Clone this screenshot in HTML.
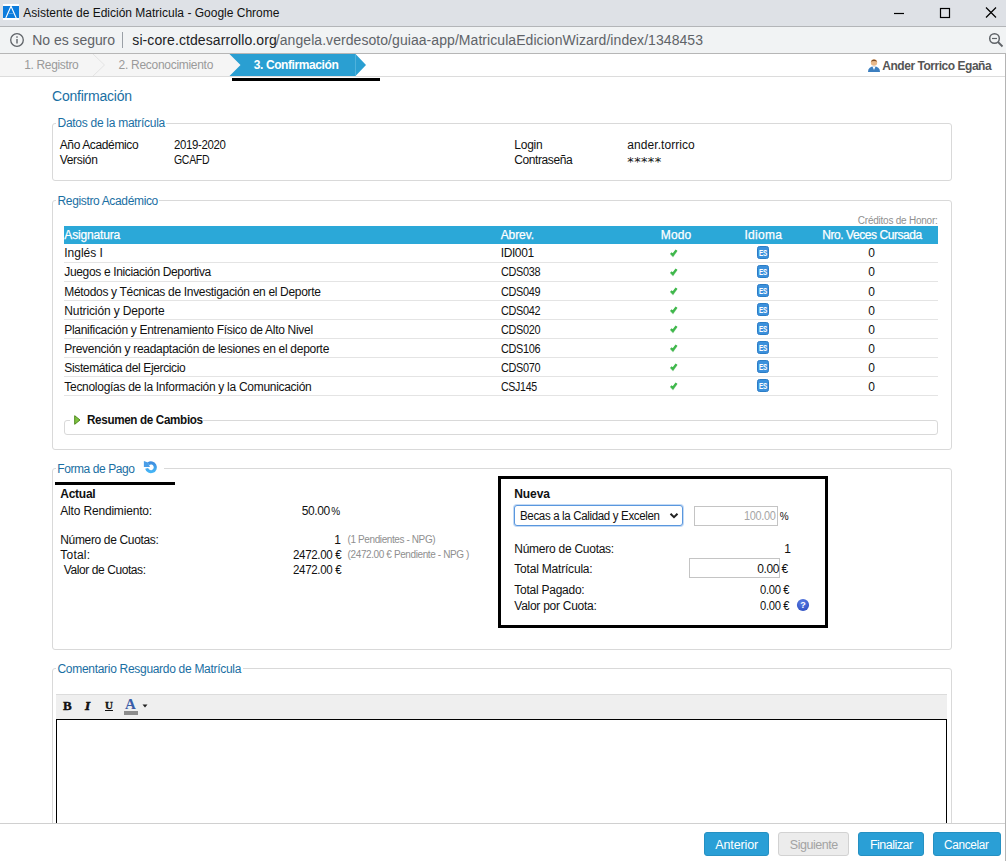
<!DOCTYPE html>
<html lang="es">
<head>
<meta charset="utf-8">
<title>Asistente de Edición Matricula</title>
<style>
*{box-sizing:border-box;margin:0;padding:0}
html,body{width:1006px;height:861px;overflow:hidden;background:#fff}
body{font-family:"Liberation Sans","DejaVu Sans",sans-serif;font-size:12px;color:#111;position:relative}
.abs{position:absolute;white-space:nowrap}
#titlebar{left:0;top:0;width:1006px;height:26px;background:#dee1e6}
#titleline{left:0;top:26px;width:1006px;height:1px;background:#b3b5b8}
#urlbar{left:0;top:27px;width:1006px;height:26px;background:#f1f3f4}
#urlline{left:0;top:53px;width:1006px;height:1px;background:#b6b6b6}
.tt{font-size:12px;color:#111;line-height:14px}
.ub{font-size:14px;color:#5f6368;line-height:16px}
#urlsep{left:122px;top:32px;width:1px;height:16px;background:#9aa0a6}
#wizbar{left:0;top:54px;width:1005px;height:23px;background:#fff;border-bottom:1px solid #dcdcdc}
#wizgray{left:0;top:54px;width:245px;height:22px;background:#f5f5f5}
.step{font-size:12px;color:#9a9a9a;line-height:14px}
#rightedge{left:1005px;top:54px;width:1px;height:807px;background:#b4b4b4}
.h1{font-size:14px;color:#1a6fa3;line-height:16px}
.fs{border:1px solid #d9d9d9;border-radius:3px}
.lgbg{background:#fff;height:14px}
.lg{color:#1a6fa3;font-size:12px;line-height:14px}
.t{font-size:12px;color:#111;line-height:14px}
.g{color:#8f8f8f;font-size:10px;line-height:12px}
#thead{left:64px;top:226px;width:874px;height:18px;background:#2ba8d8}
.th{color:#fff;line-height:14px;font-size:12px;-webkit-text-stroke:0.25px #fff}
.rowline{left:64px;width:874px;height:1px;background:#e4e4e4}
.es{left:757px;width:12px;height:13px;background:#3b92dc;border:1px solid #2a7cc6;border-radius:2.5px;color:#fff;font-size:8px;font-weight:bold;line-height:11px;text-align:center;letter-spacing:-0.5px}
.btn{top:832px;height:24px;border-radius:3px;background:#2a9fd6;border:1px solid #2590c2}
.bt{color:#fff;font-size:12.5px;line-height:14px}
</style>
</head>
<body>
<div class="abs" id="titlebar"></div>
<div class="abs" id="titleline"></div>
<div class="abs" id="urlbar"></div>
<div class="abs" id="urlline"></div>
<svg class="abs" style="left:3px;top:4px" width="16" height="16" viewBox="0 0 16 16"><rect width="16" height="16" fill="#fff"/><rect y="2" width="16" height="12" fill="#0c7cdd"/><path d="M2.800 14L8 2.200L13.200 14" fill="none" stroke="#fff" stroke-width="1.100"/><path d="M6 9.300H10" stroke="#fff" stroke-width="0.600" opacity="0.600"/></svg>
<svg class="abs" style="left:890px;top:6px" width="110" height="14" viewBox="0 0 110 14"><path d="M4 7.500H14" stroke="#000" stroke-width="1.2"/><rect x="50.500" y="2.500" width="9" height="9" fill="none" stroke="#000" stroke-width="1.2"/><path d="M96 1.500L106 11.500M106 1.500L96 11.500" stroke="#000" stroke-width="1.2"/></svg>
<svg class="abs" style="left:9px;top:32px" width="16" height="16" viewBox="0 0 16 16"><circle cx="8" cy="8" r="6.300" fill="none" stroke="#5f6368" stroke-width="1.300"/><rect x="7.300" y="7" width="1.400" height="4.500" fill="#5f6368"/><rect x="7.300" y="4.300" width="1.400" height="1.500" fill="#5f6368"/></svg>
<div class="abs" id="urlsep"></div>
<svg class="abs" style="left:987px;top:31px" width="18" height="18" viewBox="0 0 18 18"><circle cx="7.500" cy="7.500" r="4.800" fill="none" stroke="#5f6368" stroke-width="1.500"/><path d="M11 11L15.500 15.500" stroke="#5f6368" stroke-width="1.800"/><path d="M5 7.500H10" stroke="#5f6368" stroke-width="1.200"/></svg>

<div class="abs" id="wizbar"></div>
<div class="abs" id="wizgray"></div>
<svg class="abs" style="left:0;top:54px" width="400" height="28" viewBox="0 0 400 28">
<path d="M93 0L104.500 11L93 22" fill="none" stroke="#e4e4e4" stroke-width="1"/>
<path d="M229.500 0H355.500L366 11L355.500 22H229.500L240.500 11Z" fill="#2a9fd2"/>
<path d="M355.500 0V22" stroke="#4fb2dc" stroke-width="1" fill="none"/>
<rect x="232" y="24" width="148" height="3" fill="#000"/>
</svg>
<svg class="abs" style="left:867px;top:58px" width="14" height="15" viewBox="0 0 14 15"><circle cx="7" cy="4.500" r="3.200" fill="#e9b98a"/><path d="M3.800 3.500Q7 -0.500 10.200 3.500Q7 2.500 3.800 3.500Z" fill="#7a4a22"/><path d="M1 14Q1 8.500 7 8.500Q13 8.500 13 14Z" fill="#3c7fc0"/><path d="M5.500 8.600L7 12L8.500 8.600Z" fill="#fff"/></svg>
<div class="abs" id="rightedge"></div>

<!-- fieldsets -->
<div class="abs fs" style="left:52px;top:123px;width:900px;height:58px"></div>
<div class="abs lgbg" style="left:56px;top:116px;width:110px"></div>
<div class="abs fs" style="left:52px;top:200px;width:900px;height:250px"></div>
<div class="abs lgbg" style="left:56px;top:194px;width:103px"></div>
<div class="abs" id="thead"></div>
<div class="abs fs" style="left:64px;top:420px;width:874px;height:15px"></div>
<div class="abs lgbg" style="left:70px;top:413px;width:133px"></div>
<svg class="abs" style="left:74px;top:415px" width="7" height="10" viewBox="0 0 7 10"><path d="M0.700 0.700L6 5L0.700 9.300Z" fill="#7fc241" stroke="#4e8a1e" stroke-width="1"/></svg>
<div class="abs fs" style="left:52px;top:468px;width:900px;height:182px"></div>
<div class="abs lgbg" style="left:56px;top:461px;width:108px;height:15px"></div>
<svg class="abs" style="left:143px;top:460px" width="15" height="14" viewBox="0 0 15 14"><defs><linearGradient id="ug" x1="0" y1="0" x2="0" y2="1"><stop offset="0" stop-color="#3f8fe0"/><stop offset="1" stop-color="#45b4f5"/></linearGradient></defs><path d="M5.400 3.700A4.400 4.400 0 1 1 3.650 8.400" fill="none" stroke="url(#ug)" stroke-width="3.100"/><path d="M0.900 0.900L0.900 7L7 7L5 2.500Z" fill="#4a9ee8"/></svg>
<div class="abs" style="left:55px;top:482px;width:120px;height:3px;background:#000"></div>
<div class="abs" style="left:498px;top:476px;width:330px;height:152px;border:3px solid #000"></div>
<div class="abs" style="left:514px;top:505px;width:169px;height:21px;border:1px solid #5a97de;border-radius:3px;box-shadow:0 0 0 1px #c3daf5;background:#fff"></div>
<svg class="abs" style="left:669px;top:512px" width="10" height="8" viewBox="0 0 10 8"><path d="M1.500 1.800L5 5.200L8.500 1.800" fill="none" stroke="#222" stroke-width="2"/></svg>
<div class="abs" style="left:694px;top:506px;width:84px;height:20px;border:1px solid #c4c4c4;background:#fff"></div>
<div class="abs" style="left:689px;top:558px;width:91px;height:20px;border:1px solid #c4c4c4;background:#fff"></div>
<svg class="abs" style="left:796px;top:598px" width="14" height="14" viewBox="0 0 14 14"><defs><radialGradient id="hg" cx="0.45" cy="0.3" r="0.75"><stop offset="0" stop-color="#5b7fe6"/><stop offset="1" stop-color="#2f4fc0"/></radialGradient></defs><circle cx="7" cy="7" r="6.100" fill="url(#hg)"/><text x="7" y="10.200" text-anchor="middle" font-family="Liberation Sans, sans-serif" font-weight="bold" font-size="9" fill="#fff">?</text></svg>

<div class="abs fs" style="left:52px;top:668px;width:900px;height:200px"></div>
<div class="abs lgbg" style="left:56px;top:661px;width:187px"></div>
<div class="abs" style="left:56px;top:694px;width:891px;height:25px;background:#efefef;border-top:1px solid #dcdcdc"></div>
<div class="abs" style="left:56px;top:719px;width:891px;height:120px;border:1px solid #000;background:#fff"></div>
<div class="abs" style="left:63px;top:698px;font-family:'Liberation Serif',serif;font-weight:bold;font-size:13px;color:#111;-webkit-text-stroke:0.4px #111">B</div>
<div class="abs" style="left:85px;top:698px;font-family:'Liberation Serif',serif;font-weight:bold;font-style:italic;font-size:13px;color:#111;-webkit-text-stroke:0.6px #111">I</div>
<div class="abs" style="left:105px;top:699px;font-family:'Liberation Serif',serif;font-weight:bold;font-size:11px;text-decoration:underline;color:#111;-webkit-text-stroke:0.3px #111">U</div>
<div class="abs" style="left:125px;top:696px;font-family:'Liberation Serif',serif;font-weight:bold;font-size:15px;color:#3a5ea8">A</div>
<div class="abs" style="left:124px;top:711px;width:14px;height:4px;background:#8c8c8c"></div>
<svg class="abs" style="left:142px;top:704px" width="6" height="4" viewBox="0 0 6 4"><path d="M0.500 0.500H5.500L3 3.500Z" fill="#222"/></svg>

<div class="abs" style="left:0;top:823px;width:1005px;height:38px;background:#fff;border-top:1px solid #d0d0d0"></div>
<div class="abs btn" style="left:704px;width:65px"></div>
<div class="abs btn" style="left:778px;width:71px;background:#ececec;border-color:#d2d2d2"></div>
<div class="abs btn" style="left:858px;width:66px"></div>
<div class="abs btn" style="left:933px;width:68px"></div>

<div class="abs rowline" style="top:262px"></div>
<div class="abs rowline" style="top:281px"></div>
<div class="abs rowline" style="top:300px"></div>
<div class="abs rowline" style="top:319px"></div>
<div class="abs rowline" style="top:338px"></div>
<div class="abs rowline" style="top:357px"></div>
<div class="abs rowline" style="top:376px"></div>
<div class="abs rowline" style="top:395px"></div>
<svg class="abs" style="left:669px;top:248px" width="10" height="10" viewBox="0 0 10 10"><path d="M1.900 5.100L3.900 7.100L7.500 2.100" fill="none" stroke="#2f9e3c" stroke-width="2.400" transform="translate(0 0.500)" opacity="0.350"/><path d="M1.900 5L3.900 7L7.500 2.100" fill="none" stroke="#3fb84b" stroke-width="2.300"/></svg>
<svg class="abs" style="left:757px;top:246px" width="12" height="13" viewBox="0 0 12 13"><rect x="0.500" y="0.500" width="11" height="12" rx="2" fill="#3c90dc" stroke="#2b7dc6"/><text x="1.900" y="9.900" font-family="Liberation Sans, sans-serif" font-weight="bold" font-size="8.500" fill="#fff" textLength="8.400" lengthAdjust="spacingAndGlyphs">ES</text></svg>
<svg class="abs" style="left:669px;top:267px" width="10" height="10" viewBox="0 0 10 10"><path d="M1.900 5.100L3.900 7.100L7.500 2.100" fill="none" stroke="#2f9e3c" stroke-width="2.400" transform="translate(0 0.500)" opacity="0.350"/><path d="M1.900 5L3.900 7L7.500 2.100" fill="none" stroke="#3fb84b" stroke-width="2.300"/></svg>
<svg class="abs" style="left:757px;top:265px" width="12" height="13" viewBox="0 0 12 13"><rect x="0.500" y="0.500" width="11" height="12" rx="2" fill="#3c90dc" stroke="#2b7dc6"/><text x="1.900" y="9.900" font-family="Liberation Sans, sans-serif" font-weight="bold" font-size="8.500" fill="#fff" textLength="8.400" lengthAdjust="spacingAndGlyphs">ES</text></svg>
<svg class="abs" style="left:669px;top:286px" width="10" height="10" viewBox="0 0 10 10"><path d="M1.900 5.100L3.900 7.100L7.500 2.100" fill="none" stroke="#2f9e3c" stroke-width="2.400" transform="translate(0 0.500)" opacity="0.350"/><path d="M1.900 5L3.900 7L7.500 2.100" fill="none" stroke="#3fb84b" stroke-width="2.300"/></svg>
<svg class="abs" style="left:757px;top:284px" width="12" height="13" viewBox="0 0 12 13"><rect x="0.500" y="0.500" width="11" height="12" rx="2" fill="#3c90dc" stroke="#2b7dc6"/><text x="1.900" y="9.900" font-family="Liberation Sans, sans-serif" font-weight="bold" font-size="8.500" fill="#fff" textLength="8.400" lengthAdjust="spacingAndGlyphs">ES</text></svg>
<svg class="abs" style="left:669px;top:305px" width="10" height="10" viewBox="0 0 10 10"><path d="M1.900 5.100L3.900 7.100L7.500 2.100" fill="none" stroke="#2f9e3c" stroke-width="2.400" transform="translate(0 0.500)" opacity="0.350"/><path d="M1.900 5L3.900 7L7.500 2.100" fill="none" stroke="#3fb84b" stroke-width="2.300"/></svg>
<svg class="abs" style="left:757px;top:303px" width="12" height="13" viewBox="0 0 12 13"><rect x="0.500" y="0.500" width="11" height="12" rx="2" fill="#3c90dc" stroke="#2b7dc6"/><text x="1.900" y="9.900" font-family="Liberation Sans, sans-serif" font-weight="bold" font-size="8.500" fill="#fff" textLength="8.400" lengthAdjust="spacingAndGlyphs">ES</text></svg>
<svg class="abs" style="left:669px;top:324px" width="10" height="10" viewBox="0 0 10 10"><path d="M1.900 5.100L3.900 7.100L7.500 2.100" fill="none" stroke="#2f9e3c" stroke-width="2.400" transform="translate(0 0.500)" opacity="0.350"/><path d="M1.900 5L3.900 7L7.500 2.100" fill="none" stroke="#3fb84b" stroke-width="2.300"/></svg>
<svg class="abs" style="left:757px;top:322px" width="12" height="13" viewBox="0 0 12 13"><rect x="0.500" y="0.500" width="11" height="12" rx="2" fill="#3c90dc" stroke="#2b7dc6"/><text x="1.900" y="9.900" font-family="Liberation Sans, sans-serif" font-weight="bold" font-size="8.500" fill="#fff" textLength="8.400" lengthAdjust="spacingAndGlyphs">ES</text></svg>
<svg class="abs" style="left:669px;top:343px" width="10" height="10" viewBox="0 0 10 10"><path d="M1.900 5.100L3.900 7.100L7.500 2.100" fill="none" stroke="#2f9e3c" stroke-width="2.400" transform="translate(0 0.500)" opacity="0.350"/><path d="M1.900 5L3.900 7L7.500 2.100" fill="none" stroke="#3fb84b" stroke-width="2.300"/></svg>
<svg class="abs" style="left:757px;top:341px" width="12" height="13" viewBox="0 0 12 13"><rect x="0.500" y="0.500" width="11" height="12" rx="2" fill="#3c90dc" stroke="#2b7dc6"/><text x="1.900" y="9.900" font-family="Liberation Sans, sans-serif" font-weight="bold" font-size="8.500" fill="#fff" textLength="8.400" lengthAdjust="spacingAndGlyphs">ES</text></svg>
<svg class="abs" style="left:669px;top:362px" width="10" height="10" viewBox="0 0 10 10"><path d="M1.900 5.100L3.900 7.100L7.500 2.100" fill="none" stroke="#2f9e3c" stroke-width="2.400" transform="translate(0 0.500)" opacity="0.350"/><path d="M1.900 5L3.900 7L7.500 2.100" fill="none" stroke="#3fb84b" stroke-width="2.300"/></svg>
<svg class="abs" style="left:757px;top:360px" width="12" height="13" viewBox="0 0 12 13"><rect x="0.500" y="0.500" width="11" height="12" rx="2" fill="#3c90dc" stroke="#2b7dc6"/><text x="1.900" y="9.900" font-family="Liberation Sans, sans-serif" font-weight="bold" font-size="8.500" fill="#fff" textLength="8.400" lengthAdjust="spacingAndGlyphs">ES</text></svg>
<svg class="abs" style="left:669px;top:381px" width="10" height="10" viewBox="0 0 10 10"><path d="M1.900 5.100L3.900 7.100L7.500 2.100" fill="none" stroke="#2f9e3c" stroke-width="2.400" transform="translate(0 0.500)" opacity="0.350"/><path d="M1.900 5L3.900 7L7.500 2.100" fill="none" stroke="#3fb84b" stroke-width="2.300"/></svg>
<svg class="abs" style="left:757px;top:379px" width="12" height="13" viewBox="0 0 12 13"><rect x="0.500" y="0.500" width="11" height="12" rx="2" fill="#3c90dc" stroke="#2b7dc6"/><text x="1.900" y="9.900" font-family="Liberation Sans, sans-serif" font-weight="bold" font-size="8.500" fill="#fff" textLength="8.400" lengthAdjust="spacingAndGlyphs">ES</text></svg>

<div class="abs tt" id="title" style="left:23.3px;top:6px;">Asistente de Edición Matricula - Google Chrome</div>
<div class="abs ub" id="nosec" style="left:32.3px;top:32px;letter-spacing:-0.05px;">No es seguro</div>
<div class="abs ub" id="url1" style="left:132.3px;top:32px;letter-spacing:0.09px;color:#202124">si-core.ctdesarrollo.org</div>
<div class="abs ub" id="url2" style="left:275.8px;top:32px;letter-spacing:0.06px;">/angela.verdesoto/guiaa-app/MatriculaEdicionWizard/index/1348453</div>
<div class="abs step" id="s1" style="left:24.3px;top:58px;letter-spacing:-0.36px;">1. Registro</div>
<div class="abs step" id="s2" style="left:118.6px;top:58px;letter-spacing:-0.29px;">2. Reconocimiento</div>
<div class="abs step" id="s3" style="left:253.8px;top:58px;letter-spacing:-0.41px;color:#fff;font-weight:bold">3. Confirmación</div>
<div class="abs step" id="user" style="left:882.3px;top:59px;letter-spacing:-0.47px;color:#555;font-weight:bold">Ander Torrico Egaña</div>
<div class="abs h1" id="h1" style="left:52px;top:88px;letter-spacing:-0.22px;">Confirmación</div>
<div class="abs lg" id="lg1" style="left:57.5px;top:116px;letter-spacing:-0.28px;">Datos de la matrícula</div>
<div class="abs t" id="d1" style="left:59.7px;top:138px;letter-spacing:-0.37px;">Año Académico</div>
<div class="abs t" id="d2" style="left:59.7px;top:153px;letter-spacing:-0.31px;">Versión</div>
<div class="abs t" id="d3" style="left:173.6px;top:138px;letter-spacing:-0.35px;transform:scaleX(0.951);transform-origin:0 0;">2019-2020</div>
<div class="abs t" id="d4" style="left:173.6px;top:153px;letter-spacing:-0.35px;transform:scaleX(0.876);transform-origin:0 0;">GCAFD</div>
<div class="abs t" id="d5" style="left:514.3px;top:138px;letter-spacing:-0.24px;">Login</div>
<div class="abs t" id="d6" style="left:514.3px;top:153px;letter-spacing:-0.41px;">Contraseña</div>
<div class="abs t" id="d7" style="left:627.3px;top:138px;letter-spacing:0.06px;">ander.torrico</div>
<div class="abs t" id="d8" style="left:627.3px;top:155px;letter-spacing:0.35px;font-family:'DejaVu Sans',sans-serif;font-size:13px;">*****</div>
<div class="abs lg" id="lg2" style="left:57.5px;top:194px;letter-spacing:-0.35px;">Registro Académico</div>
<div class="abs g" id="ch" style="left:857.8px;top:215px;letter-spacing:-0.23px;">Créditos de Honor:</div>
<div class="abs th" id="h_1" style="left:64.3px;top:228px;letter-spacing:-0.16px;">Asignatura</div>
<div class="abs th" id="h_2" style="left:500.7px;top:228px;letter-spacing:-0.08px;">Abrev.</div>
<div class="abs th" id="h_3" style="left:660.8px;top:228px;letter-spacing:0.16px;">Modo</div>
<div class="abs th" id="h_4" style="left:744.4px;top:228px;letter-spacing:0.31px;">Idioma</div>
<div class="abs th" id="h_5" style="left:822.2px;top:228px;letter-spacing:-0.43px;">Nro. Veces Cursada</div>
<div class="abs t" id="r0a" style="left:64.3px;top:246px;letter-spacing:-0.01px;">Inglés I</div>
<div class="abs t" id="r0b" style="left:500.7px;top:246px;letter-spacing:-0.39px;">IDI001</div>
<div class="abs t" id="r0c" style="left:868.3px;top:246px;">0</div>
<div class="abs t" id="r1a" style="left:64.3px;top:265px;letter-spacing:-0.35px;">Juegos e Iniciación Deportiva</div>
<div class="abs t" id="r1b" style="left:500.7px;top:265px;letter-spacing:-0.35px;transform:scaleX(0.907);transform-origin:0 0;">CDS038</div>
<div class="abs t" id="r1c" style="left:868.3px;top:265px;">0</div>
<div class="abs t" id="r2a" style="left:64.3px;top:285px;letter-spacing:-0.32px;">Métodos y Técnicas de Investigación en el Deporte</div>
<div class="abs t" id="r2b" style="left:500.7px;top:285px;letter-spacing:-0.35px;transform:scaleX(0.907);transform-origin:0 0;">CDS049</div>
<div class="abs t" id="r2c" style="left:868.3px;top:285px;">0</div>
<div class="abs t" id="r3a" style="left:64.3px;top:304px;letter-spacing:-0.13px;">Nutrición y Deporte</div>
<div class="abs t" id="r3b" style="left:500.7px;top:304px;letter-spacing:-0.35px;transform:scaleX(0.907);transform-origin:0 0;">CDS042</div>
<div class="abs t" id="r3c" style="left:868.3px;top:304px;">0</div>
<div class="abs t" id="r4a" style="left:64.3px;top:323px;letter-spacing:-0.30px;">Planificación y Entrenamiento Físico de Alto Nivel</div>
<div class="abs t" id="r4b" style="left:500.7px;top:323px;letter-spacing:-0.35px;transform:scaleX(0.907);transform-origin:0 0;">CDS020</div>
<div class="abs t" id="r4c" style="left:868.3px;top:323px;">0</div>
<div class="abs t" id="r5a" style="left:64.3px;top:342px;letter-spacing:-0.29px;">Prevención y readaptación de lesiones en el deporte</div>
<div class="abs t" id="r5b" style="left:500.7px;top:342px;letter-spacing:-0.35px;transform:scaleX(0.907);transform-origin:0 0;">CDS106</div>
<div class="abs t" id="r5c" style="left:868.3px;top:342px;">0</div>
<div class="abs t" id="r6a" style="left:64.3px;top:361px;letter-spacing:-0.36px;">Sistemática del Ejercicio</div>
<div class="abs t" id="r6b" style="left:500.7px;top:361px;letter-spacing:-0.35px;transform:scaleX(0.907);transform-origin:0 0;">CDS070</div>
<div class="abs t" id="r6c" style="left:868.3px;top:361px;">0</div>
<div class="abs t" id="r7a" style="left:64.3px;top:380px;letter-spacing:-0.29px;">Tecnologías de la Información y la Comunicación</div>
<div class="abs t" id="r7b" style="left:500.7px;top:380px;letter-spacing:-0.35px;transform:scaleX(0.884);transform-origin:0 0;">CSJ145</div>
<div class="abs t" id="r7c" style="left:868.3px;top:380px;">0</div>
<div class="abs t" id="res" style="left:86.5px;top:413px;letter-spacing:-0.35px;transform:scaleX(0.972);transform-origin:0 0;font-weight:bold">Resumen de Cambios</div>
<div class="abs lg" id="lg3" style="left:57.3px;top:462px;letter-spacing:-0.42px;">Forma de Pago</div>
<div class="abs t" id="p1" style="left:60.3px;top:487px;letter-spacing:-0.26px;font-weight:bold">Actual</div>
<div class="abs t" id="p2" style="left:60.3px;top:504px;letter-spacing:-0.18px;">Alto Rendimiento:</div>
<div class="abs t" id="p3" style="left:301.7px;top:504px;letter-spacing:-0.38px;">50.00</div>
<div class="abs t" id="p3b" style="left:331.3px;top:505px;font-size:10px">%</div>
<div class="abs t" id="p4" style="left:60.3px;top:533px;letter-spacing:-0.35px;">Número de Cuotas:</div>
<div class="abs t" id="p5" style="left:334.3px;top:533px;">1</div>
<div class="abs g" id="p6" style="left:347.6px;top:534px;letter-spacing:-0.40px;">(1 Pendientes - NPG)</div>
<div class="abs t" id="p7" style="left:60.3px;top:548px;letter-spacing:0.22px;">Total:</div>
<div class="abs t" id="p8" style="left:292.5px;top:548px;letter-spacing:-0.35px;transform:scaleX(0.963);transform-origin:0 0;">2472.00 €</div>
<div class="abs g" id="p9" style="left:347.6px;top:549px;letter-spacing:-0.39px;">(2472.00 € Pendiente - NPG )</div>
<div class="abs t" id="p10" style="left:63.7px;top:563px;letter-spacing:-0.41px;">Valor de Cuotas:</div>
<div class="abs t" id="p11" style="left:292.5px;top:563px;letter-spacing:-0.35px;transform:scaleX(0.963);transform-origin:0 0;">2472.00 €</div>
<div class="abs t" id="n1" style="left:514.3px;top:487px;letter-spacing:-0.11px;font-weight:bold">Nueva</div>
<div class="abs t" id="n2" style="left:519.9px;top:509px;letter-spacing:-0.35px;transform:scaleX(0.959);transform-origin:0 0;">Becas a la Calidad y Excelen</div>
<div class="abs t" id="n3" style="left:744px;top:509px;letter-spacing:-0.35px;transform:scaleX(0.911);transform-origin:0 0;color:#a6a6a6">100.00</div>
<div class="abs t" id="n4" style="left:779.8px;top:510px;font-size:10px">%</div>
<div class="abs t" id="n5" style="left:514.3px;top:542px;letter-spacing:-0.26px;">Número de Cuotas:</div>
<div class="abs t" id="n6" style="left:784.3px;top:542px;">1</div>
<div class="abs t" id="n7" style="left:514.3px;top:562px;letter-spacing:-0.20px;">Total Matrícula:</div>
<div class="abs t" id="n8" style="left:757.3px;top:562px;letter-spacing:-0.39px;">0.00</div>
<div class="abs t" id="n9" style="left:781.6px;top:562px;">€</div>
<div class="abs t" id="n10" style="left:514.3px;top:583px;letter-spacing:-0.25px;">Total Pagado:</div>
<div class="abs t" id="n11" style="left:759.7px;top:583px;letter-spacing:-0.35px;transform:scaleX(0.936);transform-origin:0 0;">0.00 €</div>
<div class="abs t" id="n12" style="left:514.3px;top:599px;letter-spacing:-0.27px;">Valor por Cuota:</div>
<div class="abs t" id="n13" style="left:759.7px;top:599px;letter-spacing:-0.35px;transform:scaleX(0.936);transform-origin:0 0;">0.00 €</div>
<div class="abs lg" id="lg4" style="left:57.5px;top:662px;letter-spacing:-0.30px;">Comentario Resguardo de Matrícula</div>
<div class="abs bt" id="b1" style="left:715.3px;top:838px;letter-spacing:-0.13px;">Anterior</div>
<div class="abs bt" id="b2" style="left:789.8px;top:838px;letter-spacing:-0.45px;color:#a3a3a3">Siguiente</div>
<div class="abs bt" id="b3" style="left:869.9px;top:838px;letter-spacing:-0.51px;">Finalizar</div>
<div class="abs bt" id="b4" style="left:944.3px;top:838px;letter-spacing:-0.35px;transform:scaleX(0.944);transform-origin:0 0;">Cancelar</div>
</body>
</html>
